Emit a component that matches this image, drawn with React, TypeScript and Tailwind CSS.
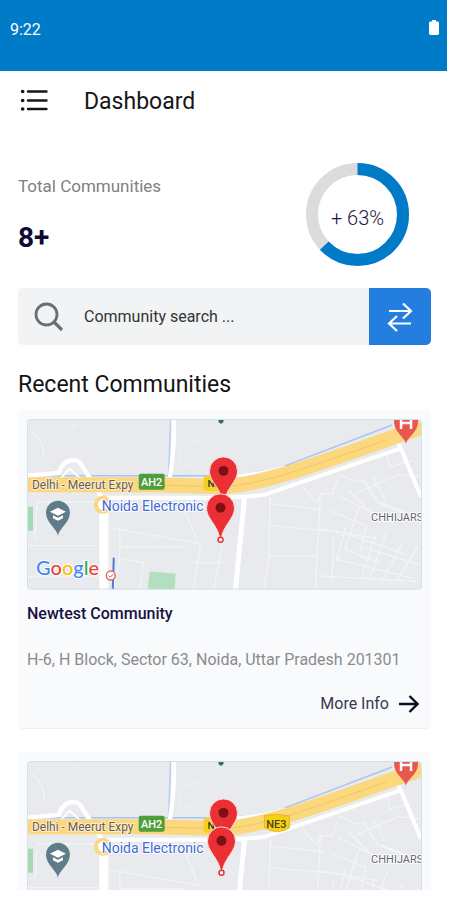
import React from "react";

type Community = {
  name: string;
  address: string;
  pinX: number;
  pinY: number;
  showRouteBadge: boolean;
};

const communities: Community[] = [
  {
    name: "Newtest Community",
    address: "H-6, H Block, Sector 63, Noida, Uttar Pradesh 201301",
    pinX: 194,
    pinY: 89,
    showRouteBadge: false,
  },
  {
    name: "Newtest Community",
    address: "H-6, H Block, Sector 63, Noida, Uttar Pradesh 201301",
    pinX: 195,
    pinY: 80,
    showRouteBadge: true,
  },
];

function StatusBar() {
  return (
    <div className="flex h-[71px] shrink-0 items-start justify-between bg-[#007bc8] pt-5 pr-2 pl-[10px] text-white">
      <span className="text-base leading-5">9:22</span>
      <svg width="10" height="15" viewBox="0 0 10 15" fill="#fff" aria-hidden="true">
        <path d="M3 0h4v1.500h1.600A1.400 1.400 0 0 1 10 2.900v10.700A1.400 1.400 0 0 1 8.600 15H1.400A1.400 1.400 0 0 1 0 13.600V2.900A1.400 1.400 0 0 1 1.400 1.500H3z" />
      </svg>
    </div>
  );
}

function AppBar() {
  return (
    <header className="flex h-[60px] items-center gap-9 pl-5">
      <button type="button" aria-label="Open menu" className="flex">
        <svg width="28" height="24" viewBox="0 0 28 24" stroke="#161616" strokeWidth="2.400" strokeLinecap="round" aria-hidden="true">
          <path d="M8 2.500h18.500M8 11.500h18.500M8 20h18.500" />
          <path d="M2.600 2.500h.1M2.600 11.500h.1M2.600 20h.1" strokeWidth="3.600" />
        </svg>
      </button>
      <h1 className="pt-[2px] text-[23px] leading-7 text-[#161616]">Dashboard</h1>
    </header>
  );
}

function Summary() {
  const percent = 63;
  return (
    <section className="flex items-start justify-between pt-8 pr-[38px] pl-[18px]">
      <div className="pt-[11px]">
        <p className="text-[17px] leading-6 text-[#808080]">Total Communities</p>
        <p className="mt-6 text-[28px] leading-8 font-bold text-[#0d0a35]">8+</p>
      </div>
      <div className="grid h-[103px] w-[103px] place-items-center">
        <svg className="col-start-1 row-start-1" width="103" height="103" viewBox="0 0 103 103" fill="none" strokeWidth="12" aria-hidden="true">
          <circle cx="51.500" cy="51.500" r="45.500" stroke="#dcdcdc" />
          <circle
            cx="51.500"
            cy="51.500"
            r="45.500"
            stroke="#007bc8"
            pathLength={100}
            strokeDasharray={`${percent} 100`}
            transform="rotate(-90 51.500 51.500)"
          />
        </svg>
        <span className="col-start-1 row-start-1 pt-[6px] text-xl leading-6 font-light text-[#1d1740]">+ {percent}%</span>
      </div>
    </section>
  );
}

function SearchBar() {
  return (
    <form className="mt-[22px] mr-4 ml-[18px] flex h-[57px] overflow-hidden rounded-[5px] bg-[#f1f3f5]" onSubmit={(e) => e.preventDefault()}>
      <label htmlFor="search" className="flex w-[66px] items-center pl-4">
        <svg width="30" height="30" viewBox="0 0 30 30" fill="none" stroke="#6c6f72" role="img" aria-label="Community search">
          <circle cx="12.500" cy="12.500" r="10.500" strokeWidth="2.800" />
          <path d="M20 20l8 8" strokeWidth="3.200" />
        </svg>
      </label>
      <input
        id="search"
        type="search"
        placeholder="Community search ..."
        className="min-w-0 flex-1 bg-transparent text-base text-[#333] outline-none placeholder:text-[#333]"
      />
      <button type="button" aria-label="Switch results" className="flex w-[62px] items-center justify-center bg-[#237ee0]">
        <svg width="26" height="30" viewBox="0 0 26 30" fill="none" stroke="#fff" strokeWidth="2.200" aria-hidden="true">
          <path d="M2 9h22M16 1.500l8 7.500-8 7.500" />
          <path d="M24 21.500H2M10 14l-8 7.500 8 7.500" />
        </svg>
      </button>
    </form>
  );
}

function RedPin({ x, y }: { x: number; y: number }) {
  return (
    <g transform={`translate(${x} ${y})`}>
      <path
        d="M0 34.500C-1.500 23-6 18-10 11.500C-13 7-14 4-14 0A14 14 0 0 1 14 0C14 4 13 7 10 11.500C6 18 1.500 23 0 34.500Z"
        fill="#ea3035"
        stroke="#f8dede"
        strokeWidth="1"
      />
      <circle r="5" fill="#7c1014" />
    </g>
  );
}

function CommunityMap({ pinX, pinY, showRouteBadge }: Pick<Community, "pinX" | "pinY" | "showRouteBadge">) {
  return (
    <svg
      viewBox="0 0 396 171"
      className="block h-auto w-full rounded-[4px]"
      fill="none"
      role="img"
      aria-label="Map of Noida Electronic City"
      fontFamily='Roboto, "Liberation Sans", sans-serif'
    >
      <rect width="396" height="171" fill="#e8eaed" />
      {/* parks */}
      <path d="M0 88h6v24H0z" fill="#a5dab5" />
      <path d="M123 153l26 2-1 16h-27z" fill="#b2dfc0" />
      {/* minor streets */}
      <g stroke="#f3f4f6" strokeWidth="1.300">
        <path d="M3 12q14 8 14 27M43 9l7-4M10 83h60M10 83l-2 38M0 127h72M0 158h72" />
        <path d="M82 109l92 16M93 111v29l-7 31M92 128h66M95 140l22 4-4 27M174 125l-7 46M167 144h30M196 126l-9 45M158 91l12 29" />
        <path d="M244 78l-2 70-5 23M243 85l54 6M242 107l70 6M242 137h48M294 74l-1 25-4 72M276 67l13 16 7-8h10l5-14M289 157l104 6M291 110l60 10" />
        <path d="M312 55l18 8 10-2M312 77l55 27M322 71l25 25M338 62l14 22 24 10M347 58l12 23M360 34l4 14 23-6M330 74l42-18 22 2M304 92l36 15-6 26M307 119l-1 43M320 107l-10 36M325 117l56 19M333 88l-14 43 34 13M349 117l-14 43M361 111l-18 50M376 124l-20 39M392 128l-22 35M309 140l79 20M338 129l58 18M355 84l38 15" />
      </g>
      <path d="M154 26v22l16-3M154 26l18-5" stroke="#eff1f3" strokeWidth="1" />
      {/* waterway and canal */}
      <path d="M0 57h175Q214 59 256 48L366 6" stroke="#a9c4f3" strokeWidth="1.500" />
      <path d="M144 0l-2 57" stroke="#b8cdef" strokeWidth="1.500" />
      {/* main streets */}
      <path d="M147 0q1 32-4 60" stroke="#fff" strokeWidth="4.500" />
      <path d="M0 57l32-3q4-13 15-13c8 0 8 9 19 22l11 19" stroke="#fff" strokeWidth="4.500" />
      <path d="M33 60l10-10 14 13" stroke="#fff" strokeWidth="2" />
      <path d="M77 88v83" stroke="#fff" strokeWidth="9" />
      <path d="M80 79h88q42 1 70-3L376 29" stroke="#fff" strokeWidth="4" />
      <path d="M368 16l7 14 20 48" stroke="#fff" strokeWidth="4" />
      <path d="M218 80l-9 91" stroke="#fff" strokeWidth="5" />
      <path d="M204 57q20 0 55-9" stroke="#fff" strokeWidth="3" />
      {/* expressway */}
      <path d="M0 66h130l66 2C235 65 270 53 396 8" stroke="#fbd77e" strokeWidth="15" />
      <path d="M120 66l76 2C235 65 270 53 360 21" stroke="#f3c55f" strokeWidth="1" />
      <circle cx="76" cy="86" r="7" fill="#fff" stroke="#fbd77e" strokeWidth="4" />
      {/* metro line */}
      <path d="M87 139l-1 32" stroke="#4b80cf" strokeWidth="2" />
      <circle cx="84" cy="157" r="4.500" fill="#fff" stroke="#d9696a" strokeWidth="1.500" />
      <path d="M82 157l1.500 1.500 3-3" stroke="#c4484b" strokeWidth="1" />
      {/* labels */}
      <g stroke="#fff" strokeWidth="2" strokeLinejoin="round" paintOrder="stroke">
        <text x="5" y="70" fontSize="12" fill="#6b5b50" strokeOpacity="0.600">Delhi - Meerut Expy</text>
        <text x="75" y="92" fontSize="14" fill="#4169d8">Noida Electronic</text>
        <text x="345" y="102" fontSize="11" fill="#62676c">CHHIJARS</text>
      </g>
      <rect x="112" y="55" width="26" height="16" rx="2" fill="#4f9e3c" />
      <text x="125" y="67" fontSize="11" fontWeight="500" fill="#fff" textAnchor="middle">AH2</text>
      <rect x="177" y="57" width="22" height="15" rx="3" fill="#f6cf22" />
      <text x="181" y="68" fontSize="10" fontWeight="500" fill="#333">NE3</text>
      {showRouteBadge && (
        <g>
          <path d="M238 55q12-3 25 0v12q-4 3-12 4q-8-1-13-4z" fill="#f6d018" stroke="#e3b91b" strokeWidth="1" strokeLinejoin="round" />
          <text x="250" y="67" fontSize="11" fontWeight="500" fill="#504514" textAnchor="middle">NE3</text>
        </g>
      )}
      {/* places */}
      <path d="M31 117C30 110 19 104 19 94a12 12 0 0 1 24 0C43 104 32 110 31 117Z" fill="#5f7c89" />
      <path d="M31 89l8 4-8 4-8-4z" fill="#fff" />
      <path d="M26 96.500l5 2.500 5-2.500v3l-5 2.500-5-2.500z" fill="#fff" />
      <path d="M192 0h5v3l-2.500 2-2.500-2z" fill="#35696c" />
      <path d="M380 25C379 18 368 14 368 2V0h24v2C392 14 381 18 380 25Z" fill="#e9574f" />
      <path d="M375 0v10M385 0v10M375 4h10" stroke="#fff" strokeWidth="2.500" />
      <RedPin x={197} y={52} />
      <RedPin x={pinX} y={pinY} />
      <circle cx={pinX} cy={pinY + 32} r="2.500" fill="#fff" stroke="#ea3035" strokeWidth="1.500" />
      <text x="9" y="156" fontSize="20" fontWeight="500" fontFamily='Lato, "Open Sans", sans-serif' stroke="#fff" strokeWidth="2" paintOrder="stroke">
        <tspan fill="#4285f4">G</tspan>
        <tspan fill="#ea4335">o</tspan>
        <tspan fill="#fbbc05">o</tspan>
        <tspan fill="#4285f4">g</tspan>
        <tspan fill="#34a853">l</tspan>
        <tspan fill="#ea4335">e</tspan>
      </text>
      <rect x="0.500" y="0.500" width="395" height="170" rx="4" stroke="#cfe3ee" />
    </svg>
  );
}

function CommunityCard({ community }: { community: Community }) {
  return (
    <li className="rounded-[5px] border-b border-[#eef1f4] bg-[#f8fafc] px-[9px] pt-[9px] pb-3">
      <CommunityMap pinX={community.pinX} pinY={community.pinY} showRouteBadge={community.showRouteBadge} />
      <h3 className="mt-3 text-base leading-6 font-medium text-[#171243]">{community.name}</h3>
      <p className="mt-[22px] text-base leading-6 text-[#8b8b8e]">{community.address}</p>
      <div className="mt-5 flex justify-end pr-[3px]">
        <a href="#more-info" className="flex items-center gap-[10px] text-base leading-6 text-[#3a3752]">
          More Info
          <svg width="20" height="18" viewBox="0 0 20 18" fill="none" stroke="#0f0c27" strokeWidth="2.400" aria-hidden="true">
            <path d="M0 9h18M10.500 1l8 8-8 8" />
          </svg>
        </a>
      </div>
    </li>
  );
}

export default function App() {
  return (
    <div className="flex h-screen flex-col bg-white pr-[15px] pb-[10px] font-[Roboto,'Liberation_Sans',sans-serif]">
      <StatusBar />
      <main className="min-h-0 flex-1 overflow-hidden">
        <AppBar />
        <Summary />
        <SearchBar />
        <section>
          <h2 className="mt-[26px] pl-[18px] text-[23px] leading-7 text-[#141414]">Recent Communities</h2>
          <ul className="mt-[11px] mr-4 ml-[18px] flex flex-col gap-[23px]">
            {communities.map((community, index) => (
              <CommunityCard key={index} community={community} />
            ))}
          </ul>
        </section>
      </main>
    </div>
  );
}
